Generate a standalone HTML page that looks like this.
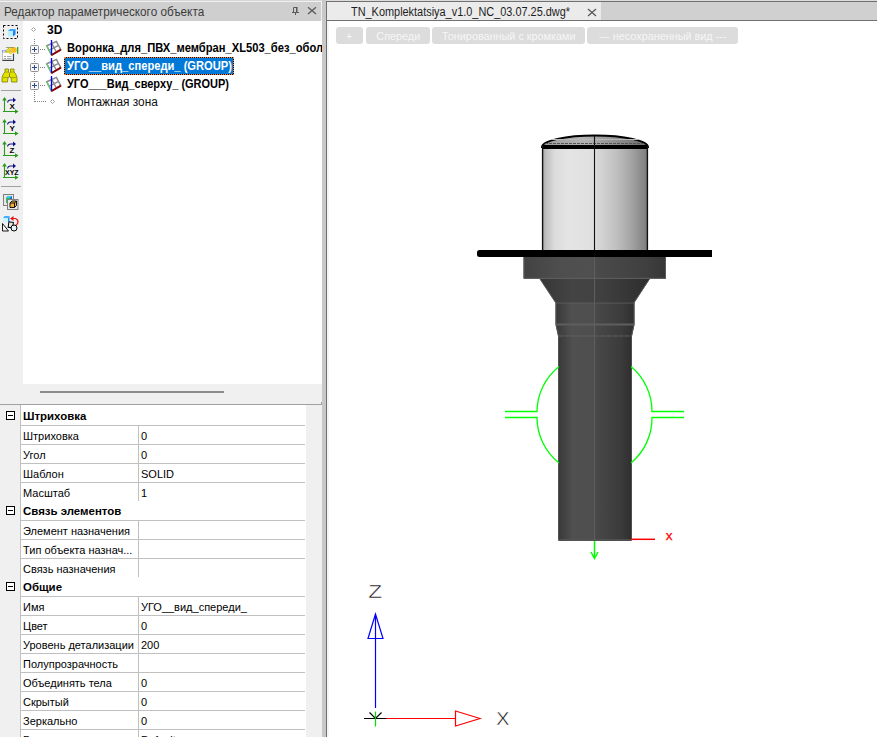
<!DOCTYPE html>
<html lang="ru"><head><meta charset="utf-8"><title>Редактор параметрического объекта</title>
<style>
*{box-sizing:border-box;margin:0;padding:0}
html,body{width:877px;height:737px;overflow:hidden;background:#fff}
body{position:relative;font-family:"Liberation Sans",sans-serif;color:#000}
.abs{position:absolute}
.t{position:absolute;white-space:nowrap;line-height:1}
/* left panel */
#lp{left:0;top:0;width:322px;height:737px;background:#f0f0f0}
#ttl{left:0;top:2px;width:321px;height:19px;background:#cfcfcf}
#ttl .t{left:3.5px;top:4px;font-size:12px;color:#3c3c3c;transform-origin:0 0;transform:scaleX(.9775)}
#tree{left:23px;top:21px;width:299px;height:363px;background:#fff;overflow:hidden}
.tr{position:absolute;left:43.500px;transform-origin:0 0;font-size:12px;font-weight:bold;white-space:nowrap;line-height:18px;height:18px}
#selb{left:41px;top:36px;width:170px;height:18px;background:#000}
#sel{left:41px;top:36px;width:170px;height:18px;background:#0078d7;background-clip:padding-box;border:1px dotted #ff8728}
#thumb{left:40px;top:391px;width:184px;height:2px;background:#8c8c8c}
#sep{left:0;top:404px;width:322px;height:1px;background:#a0a0a0}
#grid{left:0;top:405px;width:306px;height:332px;background:#fff;overflow:hidden}
#gm{left:0;top:0;width:21px;height:332px;background:#f0f0f0;border-right:1px solid #c0c0c0}
.hl{position:absolute;left:21px;width:284px;height:1px;background:#c0c0c0}
.vl{position:absolute;left:138px;width:1px;background:#c0c0c0}
.pn,.pv,.ph{position:absolute;font-size:11px;white-space:nowrap;line-height:19px;height:19px;margin-top:2px}
.pn{left:23px}.pv{left:141px}.ph{left:23px;font-weight:bold;margin-top:1px;transform-origin:0 0;transform:scaleX(1.04)}
.mb{position:absolute;left:6px;width:9px;height:9px;border:1px solid #000;background:#fff}
.mb:after{content:"";position:absolute;left:1px;top:3px;width:5px;height:1px;background:#000}
/* splitter */
#sp{left:322px;top:0;width:4px;height:737px;background:#c8c8c8}
#spd{left:326px;top:1px;width:1px;height:736px;background:#707070}
/* tabs */
#tabs{left:327px;top:0;width:550px;height:21px;background:#d0d0d0}
#tabtop{left:326px;top:0;width:551px;height:1px;background:#dcdcdc}
#tabl1{left:326px;top:1px;width:551px;height:1px;background:#707070}
#tabl2{left:327px;top:20px;width:550px;height:1px;background:#707070}
#tab{left:327px;top:2px;width:274px;height:18px;background:#ebebeb}
#tab .t{left:24px;top:3.5px;font-size:12px;color:#1e1e1e;transform-origin:0 0;transform:scaleX(.9095)}
.btn{position:absolute;top:27px;height:17px;background:#dcdcdc;border-radius:3px;color:#f6f6f6;font-size:11px;line-height:18px;text-align:center;white-space:nowrap}
.btn span{display:inline-block;transform:scaleX(.985)}
</style></head><body>
<div id="lp" class="abs"></div>
<div class="abs" style="left:0;top:0;width:322px;height:1px;background:#d6d6d6"></div>
<div id="ttl" class="abs"><span class="t">Редактор параметрического объекта</span>
<svg class="abs" style="left:290px;top:3px" width="30" height="14" viewBox="0 0 30 14"><path d="M3.500 2.500h4M3.500 2.500v5M7 2.500v5M2 7.500h7M5.500 7.500v2.500" stroke="#5a5a5a" fill="none" stroke-width="1"/><path d="M6.500 2.500v5" stroke="#5a5a5a" stroke-width="1"/><path d="M18 2.200l8 6.800M26 2.200l-8 6.800" stroke="#5a5a5a" fill="none" stroke-width="1.300"/></svg>
</div>
<div id="tree" class="abs">
 <div id="selb" class="abs"></div><div id="sel" class="abs"></div>
 <div class="tr" style="left:24px;top:0px">3D</div>
 <div class="tr" style="top:18px;transform:scaleX(.93)">Воронка_для_ПВХ_мембран_XL503_без_оболочки</div>
 <div class="tr" style="top:36px;color:#fff;transform:scaleX(.93)">УГО__вид_спереди_ (GROUP)</div>
 <div class="tr" style="top:54px;transform:scaleX(.915)">УГО___Вид_сверху_ (GROUP)</div>
 <div class="tr" style="top:72px;font-weight:normal;color:#111;transform:scaleX(.987)">Монтажная зона</div>
</div>
<svg class="abs" style="left:0;top:0" width="330" height="240" viewBox="0 0 330 240" shape-rendering="auto">
<rect x="3.5" y="25.5" width="14" height="13" fill="none" stroke="#000" stroke-width="1" stroke-dasharray="2 2"/>
<path d="M8 31h5v5.5h-5z" fill="#b8f0ff"/><path d="M8 31l2-2h5.5l-2.5 2z" fill="#38a8ff"/><path d="M13 31l2.5-2v5.5l-2.5 2z" fill="#1e80f0"/>
<rect x="2.500" y="50.500" width="11" height="10" fill="#fff" stroke="#c0c0c0"/><rect x="2" y="50" width="5" height="2.500" fill="#9a98e4"/><rect x="3" y="50.500" width="2" height="2" fill="#aee4ff"/><path d="M13.400 54v7M2.500 60.400h11.500" stroke="#404040" stroke-width="1.300" fill="none"/><path d="M4 56.500h2M7 56.500h4.500M4 58.500h2M7 58.500h4.500" stroke="#a8a8a8" stroke-width="1"/><rect x="11.500" y="55.500" width="1.500" height="4.500" fill="#c8ecff"/>
<path d="M4.500 53l3-4 2.500-1.700h5.500l1.200 1.500v3.200l-4.500 1-1.700 1.800-1.500-2-2-0.300z" fill="#ffb820"/><path d="M4.500 53l3-4 2.500-1.700h2l-1 2.500 1.700 1.200-2.200 3.800-1.500-2-2-0.300z" fill="#e8e040"/><path d="M6 47.500h8" stroke="#8a8a60" stroke-width="0.800"/><path d="M7 49.500l3 3M8.500 48.500l3 3.500M6 51.500l2 1" stroke="#807030" stroke-width="0.700" stroke-dasharray="1 1" fill="none"/><rect x="17" y="47" width="1.300" height="7" fill="#2eb02e"/>
<g fill="#e2e200" stroke="#7c7c00" stroke-width="0.800" stroke-linejoin="round"><path d="M5 69h3.500v3l1 1.500v3.500l-1.500 0.500-0.500 4.500h-5.500v-4.500l1.500-4 1.500-1.500z"/><path d="M10.500 69h3.500v3l1.500 1.500 1.500 4v4.500h-5.500l-0.500-4.500-1.500-0.500v-3.500l1-1.500z"/><path d="M3 77.500h5M11 77.500h5.500M5 72h3.500M10.500 72h3.500" fill="none" stroke="#9a9a00"/></g>
<path d="M1 90.500h20M1 186.500h20" stroke="#a0a0a0" stroke-width="1"/>
<g transform="translate(0,97)"><path d="M4.500 1v14M3 14.500h15" stroke="#2a9a1a" stroke-width="1.100" fill="none"/><path d="M4.500 0l-2.300 3.500h4.600z M18.500 14.500l-3.500-2.200v4.400z" fill="#2a9a1a"/><path d="M7.500 5.500q0.500-2.500 3-2.500h4" stroke="#10108a" stroke-width="1.100" fill="none"/><path d="M16 3l-3-2.500v5z" fill="#10108a"/><text x="9.5" y="12" font-family="Liberation Sans,sans-serif" font-size="8" font-weight="bold" fill="#000">X</text></g>
<g transform="translate(0,119)"><path d="M4.500 1v14M3 14.500h15" stroke="#2a9a1a" stroke-width="1.100" fill="none"/><path d="M4.500 0l-2.300 3.500h4.600z M18.500 14.500l-3.500-2.200v4.400z" fill="#2a9a1a"/><path d="M7.500 5.500q0.500-2.500 3-2.500h4" stroke="#10108a" stroke-width="1.100" fill="none"/><path d="M16 3l-3-2.500v5z" fill="#10108a"/><text x="9.5" y="12" font-family="Liberation Sans,sans-serif" font-size="8" font-weight="bold" fill="#000">Y</text></g>
<g transform="translate(0,141)"><path d="M4.500 1v14M3 14.500h15" stroke="#2a9a1a" stroke-width="1.100" fill="none"/><path d="M4.500 0l-2.300 3.500h4.600z M18.500 14.500l-3.500-2.200v4.400z" fill="#2a9a1a"/><path d="M7.500 5.500q0.500-2.500 3-2.500h4" stroke="#10108a" stroke-width="1.100" fill="none"/><path d="M16 3l-3-2.500v5z" fill="#10108a"/><text x="9.5" y="12" font-family="Liberation Sans,sans-serif" font-size="8" font-weight="bold" fill="#000">Z</text></g>
<g transform="translate(0,163)"><path d="M4.500 1v14M3 14.500h15" stroke="#2a9a1a" stroke-width="1.100" fill="none"/><path d="M4.500 0l-2.300 3.500h4.600z M18.500 14.500l-3.500-2.200v4.400z" fill="#2a9a1a"/><path d="M7.500 5.500q0.500-2.500 3-2.500h4" stroke="#10108a" stroke-width="1.100" fill="none"/><path d="M16 3l-3-2.500v5z" fill="#10108a"/><text x="5" y="12" font-family="Liberation Sans,sans-serif" font-size="7" font-weight="bold" fill="#000">XYZ</text></g>
<rect x="3.500" y="194.500" width="10" height="11" fill="#e8e8e8" stroke="#808080"/><path d="M6 198l2-2h4v5l-2 2h-4z" fill="#2060d0"/><path d="M6 198h4v5h-4z" fill="#30c060"/><path d="M6 198l2-2h4l-2 2z" fill="#30d0e0"/>
<rect x="7.500" y="199.500" width="10.500" height="10" fill="#e8e8e8" stroke="#808080"/><path d="M10 203l2-2h4.500v4.500l-2 2h-4.500z" fill="#f0b040" stroke="#000" stroke-width="0.900"/><path d="M10 203h4.500v4.500M14.500 203l2-2" fill="none" stroke="#000" stroke-width="0.900"/>
<path d="M3 218h5v4.500h-5z" fill="#c8f4ff"/><path d="M3 218l1.500-2h5l-1.500 2z" fill="#40b0ff"/><path d="M8 218l1.500-2v4.500l-1.500 2z" fill="#2090f0"/>
<path d="M11.500 218.500h4q2.500 1 2.500 3.500t-3.500 4" fill="none" stroke="#f01010" stroke-width="1.200"/><path d="M10 218.500l3.500-2.500v5z" fill="#f01010"/>
<path d="M2.500 223.500v7.500h6z" fill="#f4f4f4" stroke="#000" stroke-width="0.900"/><rect x="8.500" y="222" width="4.500" height="5.500" fill="#e8e8e8" stroke="#000" transform="rotate(8 10 225)"/><circle cx="14" cy="228" r="3" fill="#e8f0f8" stroke="#000"/>
<path d="M33.500 27.500l2 2-2 2-2-2z M52.500 99.500l2 2-2 2-2-2z" fill="#fff" stroke="#a0a0a0" stroke-width="1"/>
<path d="M34.500 39v63" stroke="#808080" stroke-width="1" stroke-dasharray="1 1" fill="none"/>
<path d="M35 101.500h11" stroke="#808080" stroke-width="1" stroke-dasharray="1 1" fill="none"/>
<path d="M40 49.5h5" stroke="#808080" stroke-width="1" stroke-dasharray="1 1"/>
<rect x="30.500" y="45.500" width="8" height="8" rx="1" fill="#f8f8f8" stroke="#919191"/><path d="M32 49.5h5M34.500 47v5" stroke="#2b4a90" stroke-width="1"/>
<g transform="translate(0,40)"><path d="M46.800 5.800l9.600-4.400 4.400 8.200-9.400 5.400z M49 10.300l9.600-4.900 M51.800 3.500l4.500 8.500" fill="none" stroke="#8a8a8a" stroke-width="1.500"/><path d="M46.800 5.800l4.500 9" stroke="#6c6" stroke-width="1.300"/><path d="M51.300 15.200l9.600-5.600" stroke="#8b0000" stroke-width="1.800"/><path d="M51.500 0v14.500" stroke="#0000ff" stroke-width="1.300"/></g>
<path d="M40 67.5h5" stroke="#808080" stroke-width="1" stroke-dasharray="1 1"/>
<rect x="30.500" y="63.500" width="8" height="8" rx="1" fill="#f8f8f8" stroke="#919191"/><path d="M32 67.5h5M34.500 65v5" stroke="#2b4a90" stroke-width="1"/>
<g transform="translate(0,58)"><path d="M46.800 5.800l9.600-4.400 4.400 8.200-9.400 5.400z M49 10.300l9.600-4.900 M51.800 3.500l4.500 8.500" fill="none" stroke="#8a8a8a" stroke-width="1.500"/><path d="M46.800 5.800l4.500 9" stroke="#6c6" stroke-width="1.300"/><path d="M51.300 15.200l9.600-5.600" stroke="#8b0000" stroke-width="1.800"/><path d="M51.500 0v14.500" stroke="#0000ff" stroke-width="1.300"/></g>
<path d="M40 85.5h5" stroke="#808080" stroke-width="1" stroke-dasharray="1 1"/>
<rect x="30.500" y="81.500" width="8" height="8" rx="1" fill="#f8f8f8" stroke="#919191"/><path d="M32 85.5h5M34.500 83v5" stroke="#2b4a90" stroke-width="1"/>
<g transform="translate(0,76)"><path d="M46.800 5.800l9.600-4.400 4.400 8.200-9.400 5.400z M49 10.300l9.600-4.900 M51.800 3.500l4.500 8.500" fill="none" stroke="#8a8a8a" stroke-width="1.500"/><path d="M46.800 5.800l4.500 9" stroke="#6c6" stroke-width="1.300"/><path d="M51.300 15.200l9.600-5.600" stroke="#8b0000" stroke-width="1.800"/><path d="M51.500 0v14.500" stroke="#0000ff" stroke-width="1.300"/></g>
</svg>
<div id="thumb" class="abs"></div>
<div id="sep" class="abs"></div>
<div id="grid" class="abs"><div id="gm" class="abs"></div>
<div class="mb" style="top:6px"></div><div class="ph" style="top:1px">Штриховка</div>
<div class="hl" style="top:20px"></div>
<div class="pn" style="top:20px">Штриховка</div><div class="vl" style="top:20px;height:19px"></div><div class="pv" style="top:20px">0</div>
<div class="hl" style="top:39px"></div>
<div class="pn" style="top:39px">Угол</div><div class="vl" style="top:39px;height:19px"></div><div class="pv" style="top:39px">0</div>
<div class="hl" style="top:58px"></div>
<div class="pn" style="top:58px">Шаблон</div><div class="vl" style="top:58px;height:19px"></div><div class="pv" style="top:58px">SOLID</div>
<div class="hl" style="top:77px"></div>
<div class="pn" style="top:77px">Масштаб</div><div class="vl" style="top:77px;height:19px"></div><div class="pv" style="top:77px">1</div>
<div class="mb" style="top:101px"></div><div class="ph" style="top:96px">Связь элементов</div>
<div class="hl" style="top:115px"></div>
<div class="pn" style="top:115px">Элемент назначения</div><div class="vl" style="top:115px;height:19px"></div><div class="pv" style="top:115px"></div>
<div class="hl" style="top:134px"></div>
<div class="pn" style="top:134px">Тип объекта назнач...</div><div class="vl" style="top:134px;height:19px"></div><div class="pv" style="top:134px"></div>
<div class="hl" style="top:153px"></div>
<div class="pn" style="top:153px">Связь назначения</div><div class="vl" style="top:153px;height:19px"></div><div class="pv" style="top:153px"></div>
<div class="mb" style="top:177px"></div><div class="ph" style="top:172px">Общие</div>
<div class="hl" style="top:191px"></div>
<div class="pn" style="top:191px">Имя</div><div class="vl" style="top:191px;height:19px"></div><div class="pv" style="top:191px">УГО__вид_спереди_</div>
<div class="hl" style="top:210px"></div>
<div class="pn" style="top:210px">Цвет</div><div class="vl" style="top:210px;height:19px"></div><div class="pv" style="top:210px">0</div>
<div class="hl" style="top:229px"></div>
<div class="pn" style="top:229px">Уровень детализации</div><div class="vl" style="top:229px;height:19px"></div><div class="pv" style="top:229px">200</div>
<div class="hl" style="top:248px"></div>
<div class="pn" style="top:248px">Полупрозрачность</div><div class="vl" style="top:248px;height:19px"></div><div class="pv" style="top:248px"></div>
<div class="hl" style="top:267px"></div>
<div class="pn" style="top:267px">Объединять тела</div><div class="vl" style="top:267px;height:19px"></div><div class="pv" style="top:267px">0</div>
<div class="hl" style="top:286px"></div>
<div class="pn" style="top:286px">Скрытый</div><div class="vl" style="top:286px;height:19px"></div><div class="pv" style="top:286px">0</div>
<div class="hl" style="top:305px"></div>
<div class="pn" style="top:305px">Зеркально</div><div class="vl" style="top:305px;height:19px"></div><div class="pv" style="top:305px">0</div>
<div class="hl" style="top:324px"></div>
<div class="pn" style="top:324px">Группа</div><div class="vl" style="top:324px;height:19px"></div><div class="pv" style="top:324px">Default</div>
<div class="hl" style="top:343px"></div>
</div>
<div id="sp" class="abs"></div><div id="spd" class="abs"></div>
<div class="abs" style="left:327px;top:21px;width:2px;height:716px;background:#f5f5f5"></div><div class="abs" style="left:321px;top:402px;width:1px;height:2px;background:#a0a0a0"></div>
<div id="tabs" class="abs"></div><div id="tabtop" class="abs"></div><div id="tabl1" class="abs"></div><div id="tabl2" class="abs"></div>
<div id="tab" class="abs"><span class="t">TN_Komplektatsiya_v1.0_NC_03.07.25.dwg*</span>
<svg class="abs" style="left:259px;top:4px" width="12" height="12" viewBox="0 0 12 12"><path d="M2 3l8 6.900M10 3l-8 6.900" stroke="#5a5a5a" fill="none" stroke-width="1.300"/></svg></div>
<div class="btn" style="left:336px;width:27px"><span>+</span></div>
<div class="btn" style="left:366px;width:64px"><span>Спереди</span></div>
<div class="btn" style="left:432px;width:153px"><span>Тонированный с кромками</span></div>
<div class="btn" style="left:587px;width:151px"><span>--- несохраненный вид ---</span></div>
<svg class="abs" style="left:330px;top:60px" width="547" height="677" viewBox="330 60 547 677">
<defs>
<linearGradient id="gcap" x1="0" x2="1" y1="0" y2="0"><stop offset="0" stop-color="#a8a8a8"/><stop offset="0.040" stop-color="#c0c0c0"/><stop offset="0.120" stop-color="#dcdcdc"/><stop offset="0.250" stop-color="#e4e4e4"/><stop offset="0.480" stop-color="#e0e0e0"/><stop offset="0.520" stop-color="#d8d8d8"/><stop offset="0.700" stop-color="#c0c0c0"/><stop offset="0.850" stop-color="#a2a2a2"/><stop offset="0.950" stop-color="#888"/><stop offset="1" stop-color="#7c7c7c"/></linearGradient>
<linearGradient id="gdk" x1="0" x2="1" y1="0" y2="0"><stop offset="0" stop-color="#383838"/><stop offset="0.200" stop-color="#505050"/><stop offset="0.480" stop-color="#4e4e4e"/><stop offset="0.520" stop-color="#484848"/><stop offset="0.850" stop-color="#3b3b3b"/><stop offset="1" stop-color="#2e2e2e"/></linearGradient>
<linearGradient id="gfl" x1="0" x2="1" y1="0" y2="0"><stop offset="0" stop-color="#424242"/><stop offset="0.250" stop-color="#4e4e4e"/><stop offset="0.480" stop-color="#505050"/><stop offset="0.520" stop-color="#4a4a4a"/><stop offset="0.850" stop-color="#404040"/><stop offset="1" stop-color="#363636"/></linearGradient>
<linearGradient id="gcn" x1="0" x2="1" y1="0" y2="0"><stop offset="0" stop-color="#363636"/><stop offset="0.300" stop-color="#444"/><stop offset="0.500" stop-color="#424242"/><stop offset="0.850" stop-color="#343434"/><stop offset="1" stop-color="#2e2e2e"/></linearGradient>
<linearGradient id="gdome" x1="0" x2="1" y1="0" y2="0"><stop offset="0" stop-color="#9a9a9a"/><stop offset="0.400" stop-color="#b4b4b4"/><stop offset="1" stop-color="#6a6a6a"/></linearGradient>
</defs>
<path d="M558 336h74v203.500q0 1.500-1.500 1.500h-71q-1.500 0-1.500-1.500z" fill="url(#gdk)"/>
<path d="M558.500 336v204M631.500 336v204" stroke="#585858" stroke-width="1" opacity=".8"/><path d="M559 540h72" stroke="#565656" stroke-width="1.600"/>
<path d="M555.500 302h79v22.500l-2.500 11.500h-74l-2.500-11.500z" fill="url(#gdk)"/>
<path d="M556 302.500v22l2.500 11.500M634 302.500v22l-2.500 11.500" fill="none" stroke="#565656" stroke-width="1"/>
<path d="M556 324.500h78" stroke="#5e5e5e" stroke-width="2"/><path d="M556 302.800h78" stroke="#5c5c5c" stroke-width="1.200"/><path d="M558.500 336h73" stroke="#606060" stroke-width="1.200" stroke-dasharray="5 1"/>
<path d="M539.500 278.500h110.500l-15.500 24h-79z" fill="url(#gcn)"/><path d="M540 279l15.500 23.500M649.500 279l-15.500 23.500" stroke="#5a5a5a" stroke-width="1" fill="none"/>
<path d="M523.500 256h142.500v22.800h-142.500z" fill="url(#gfl)"/><path d="M524 257v21.300h141.500v-21.300" fill="none" stroke="#5c5c5c" stroke-width="1"/>
<path d="M542 146h106v105h-106z" fill="url(#gcap)"/>
<path d="M542 147A53 11.500 0 0 1 648 147z" fill="url(#gdome)" stroke="#000" stroke-width="1.900"/>
<path d="M551 139.500h87" stroke="#b8b8b8" stroke-width="1"/><path d="M545 143.500h99" stroke="#555" stroke-width="1" stroke-dasharray="3 1"/>
<rect x="542" y="145" width="106" height="4" fill="#000"/>
<path d="M542.600 146v105M647.400 146v105" stroke="#111" stroke-width="1.400"/>
<path d="M594.500 135.500v115" stroke="#111" stroke-width="1.100"/><path d="M594.500 257v283" stroke="#5e5e5e" stroke-width="1"/>
<path d="M479.500 250h232.500v7h-232.500q-2.500 0-2.500-2.500v-2q0-2.500 2.500-2.500z" fill="#000"/>
<g fill="none" stroke="#00ff00" stroke-width="1.300"><path d="M559 366.500A58.500 58.500 0 0 0 537 411.500h-32M505 417.500h32A58.500 58.500 0 0 0 559 463"/><path d="M631 366.500A58.500 58.500 0 0 1 652 411.500h32M684 417.500h-32A58.500 58.500 0 0 1 631 463"/><path d="M594.500 541v17M591 552l3.500 6.500 3.500-6.500" stroke-width="1.500"/></g>
<path d="M631 539.300h24" stroke="#f00" stroke-width="1.500"/><text x="665.700" y="540" font-family="Liberation Sans,sans-serif" font-size="13.500" fill="#ff0000" stroke="#ff0000" stroke-width="0.250">x</text>
<g fill="none" stroke-width="1.200"><path d="M375.500 614v94M375.500 614l-7.500 24.500h15z" stroke="#0000ff"/><path d="M386 718.500h69M480 718.500l-24.500-7.500v15z" stroke="#ff0000"/><path d="M364 718.500h22M369.500 712.500l6 6 6-6" stroke="#000"/><path d="M375.500 711.500v15" stroke="#00e000"/></g>
<text transform="translate(368.300,597.800) scale(1.27,1)" font-family="Liberation Sans,sans-serif" font-size="18" fill="#111" stroke="#fff" stroke-width="0.450">Z</text><text transform="translate(496,725) scale(1.13,1)" font-family="Liberation Sans,sans-serif" font-size="18" fill="#111" stroke="#fff" stroke-width="0.450">X</text>
</svg>
</body></html>
